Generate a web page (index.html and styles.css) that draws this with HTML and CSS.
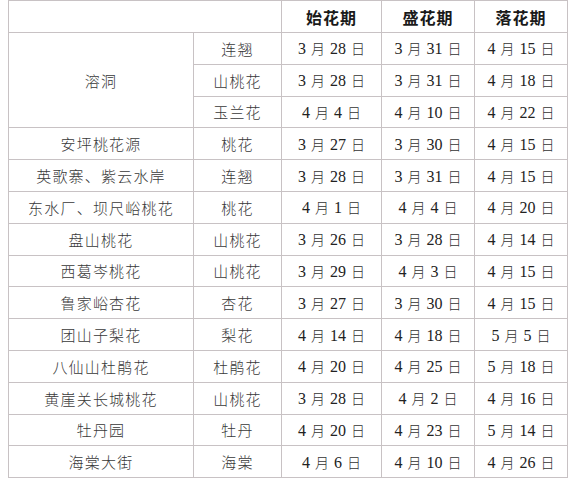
FILE: index.html
```html
<!DOCTYPE html>
<html lang="zh-CN">
<head>
<meta charset="utf-8">
<title>花期表</title>
<link rel="stylesheet" href="styles.css">
</head>
<body>
<table class="bloom">
  <colgroup>
    <col class="c-place"><col class="c-kind"><col class="c-date"><col class="c-date2"><col class="c-date3">
  </colgroup>
  <thead>
    <tr class="head"><th colspan="2"></th><th>始花期</th><th>盛花期</th><th>落花期</th></tr>
  </thead>
  <tbody>
    <tr><td class="place" rowspan="3">溶洞</td><td class="kind">连翘</td><td class="date">3 <span class="u">月</span> 28 <span class="u">日</span></td><td class="date">3 <span class="u">月</span> 31 <span class="u">日</span></td><td class="date">4 <span class="u">月</span> 15 <span class="u">日</span></td></tr>
    <tr><td class="kind">山桃花</td><td class="date">3 <span class="u">月</span> 28 <span class="u">日</span></td><td class="date">3 <span class="u">月</span> 31 <span class="u">日</span></td><td class="date">4 <span class="u">月</span> 18 <span class="u">日</span></td></tr>
    <tr><td class="kind">玉兰花</td><td class="date">4 <span class="u">月</span> 4 <span class="u">日</span></td><td class="date">4 <span class="u">月</span> 10 <span class="u">日</span></td><td class="date">4 <span class="u">月</span> 22 <span class="u">日</span></td></tr>
    <tr><td class="place">安坪桃花源</td><td class="kind">桃花</td><td class="date">3 <span class="u">月</span> 27 <span class="u">日</span></td><td class="date">3 <span class="u">月</span> 30 <span class="u">日</span></td><td class="date">4 <span class="u">月</span> 15 <span class="u">日</span></td></tr>
    <tr><td class="place">英歌寨、紫云水岸</td><td class="kind">连翘</td><td class="date">3 <span class="u">月</span> 28 <span class="u">日</span></td><td class="date">3 <span class="u">月</span> 31 <span class="u">日</span></td><td class="date">4 <span class="u">月</span> 15 <span class="u">日</span></td></tr>
    <tr><td class="place">东水厂、坝尺峪桃花</td><td class="kind">桃花</td><td class="date">4 <span class="u">月</span> 1 <span class="u">日</span></td><td class="date">4 <span class="u">月</span> 4 <span class="u">日</span></td><td class="date">4 <span class="u">月</span> 20 <span class="u">日</span></td></tr>
    <tr><td class="place">盘山桃花</td><td class="kind">山桃花</td><td class="date">3 <span class="u">月</span> 26 <span class="u">日</span></td><td class="date">3 <span class="u">月</span> 28 <span class="u">日</span></td><td class="date">4 <span class="u">月</span> 14 <span class="u">日</span></td></tr>
    <tr><td class="place">西葛岑桃花</td><td class="kind">山桃花</td><td class="date">3 <span class="u">月</span> 29 <span class="u">日</span></td><td class="date">4 <span class="u">月</span> 3 <span class="u">日</span></td><td class="date">4 <span class="u">月</span> 15 <span class="u">日</span></td></tr>
    <tr><td class="place">鲁家峪杏花</td><td class="kind">杏花</td><td class="date">3 <span class="u">月</span> 27 <span class="u">日</span></td><td class="date">3 <span class="u">月</span> 30 <span class="u">日</span></td><td class="date">4 <span class="u">月</span> 15 <span class="u">日</span></td></tr>
    <tr><td class="place">团山子梨花</td><td class="kind">梨花</td><td class="date">4 <span class="u">月</span> 14 <span class="u">日</span></td><td class="date">4 <span class="u">月</span> 18 <span class="u">日</span></td><td class="date">5 <span class="u">月</span> 5 <span class="u">日</span></td></tr>
    <tr><td class="place">八仙山杜鹃花</td><td class="kind">杜鹃花</td><td class="date">4 <span class="u">月</span> 20 <span class="u">日</span></td><td class="date">4 <span class="u">月</span> 25 <span class="u">日</span></td><td class="date">5 <span class="u">月</span> 18 <span class="u">日</span></td></tr>
    <tr><td class="place">黄崖关长城桃花</td><td class="kind">山桃花</td><td class="date">3 <span class="u">月</span> 28 <span class="u">日</span></td><td class="date">4 <span class="u">月</span> 2 <span class="u">日</span></td><td class="date">4 <span class="u">月</span> 16 <span class="u">日</span></td></tr>
    <tr><td class="place">牡丹园</td><td class="kind">牡丹</td><td class="date">4 <span class="u">月</span> 20 <span class="u">日</span></td><td class="date">4 <span class="u">月</span> 23 <span class="u">日</span></td><td class="date">5 <span class="u">月</span> 14 <span class="u">日</span></td></tr>
    <tr><td class="place">海棠大街</td><td class="kind">海棠</td><td class="date">4 <span class="u">月</span> 6 <span class="u">日</span></td><td class="date">4 <span class="u">月</span> 10 <span class="u">日</span></td><td class="date">4 <span class="u">月</span> 26 <span class="u">日</span></td></tr>
  </tbody>
</table>
</body>
</html>
```

FILE: styles.css
```css
html, body {
  margin: 0;
  padding: 0;
  background: #ffffff;
}

body {
  padding: 0 0 0 8px;
  font-family: "Liberation Serif", "Noto Sans CJK SC", serif;
  color: #262626;
}

.bloom {
  border-collapse: collapse;
  table-layout: fixed;
  width: 559px;
}

.c-place { width: 185px; }
.c-kind { width: 88px; }
.c-date { width: 100px; }
.c-date2 { width: 93px; }
.c-date3 { width: 93px; }

.bloom th,
.bloom td {
  border: 1px solid #c8c2c4;
  padding: 0;
  text-align: center;
  vertical-align: middle;
  white-space: nowrap;
}

.bloom tr {
  height: 31.8px;
}

.bloom .head {
  height: 32px;
}

.bloom th {
  font-family: "Noto Sans CJK SC", sans-serif;
  font-weight: 700;
  font-size: 16px;
  letter-spacing: 1px;
  color: #1a1a1a;
}

.place,
.kind {
  font-family: "Noto Sans CJK SC", sans-serif;
  font-weight: 300;
  font-size: 15px;
  letter-spacing: 1.2px;
  color: #383838;
}

.date {
  font-size: 16px;
  color: #222222;
  word-spacing: 1px;
}

.date .u {
  font-family: "Noto Sans CJK SC", sans-serif;
  font-weight: 300;
  font-size: 14px;
  color: #333333;
}
```
